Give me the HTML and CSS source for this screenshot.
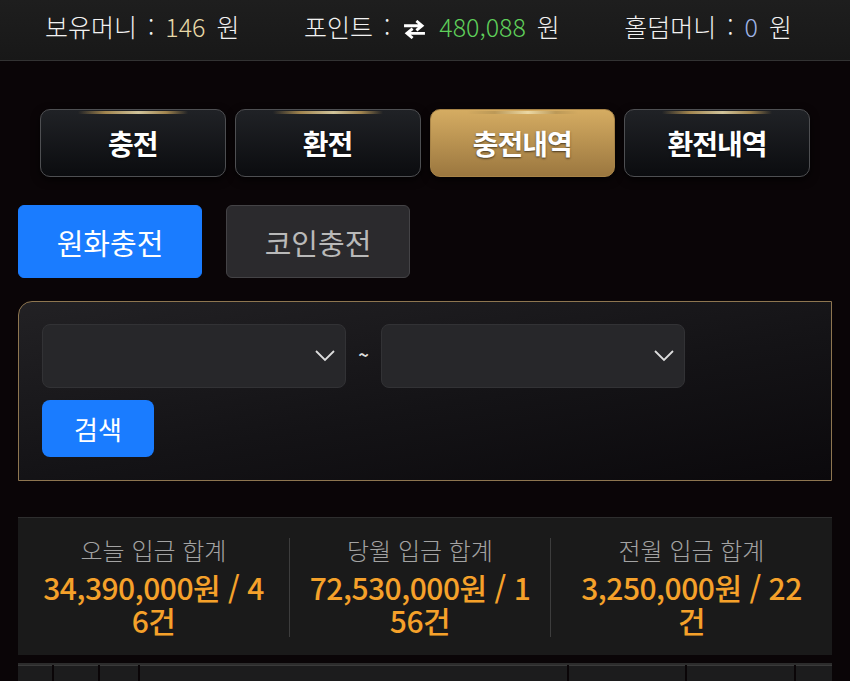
FILE: index.html
```html
<!DOCTYPE html>
<html lang="ko">
<head>
<meta charset="utf-8">
<link rel="stylesheet" href="styles.css">
</head>
<body>
<header class="topbar">
  <div class="stat-item">보유머니 : <span class="v-gold">146</span> 원</div>
  <div class="stat-item">포인트 : <svg class="swap" viewBox="0 0 26 20" width="25" height="19"><path d="M2 6h18M15 1l6 5-6 5" fill="none" stroke="#fff" stroke-width="3"/><path d="M24 14H6M11 9l-6 5 6 5" fill="none" stroke="#fff" stroke-width="3"/></svg> <span class="v-green">480,088</span> 원</div>
  <div class="stat-item">홀덤머니 : <span class="v-blue">0</span> 원</div>
</header>
<main class="page">
  <nav class="tabs">
    <button class="tab">충전</button>
    <button class="tab">환전</button>
    <button class="tab active">충전내역</button>
    <button class="tab">환전내역</button>
  </nav>
  <div class="subtabs">
    <button class="subtab on">원화충전</button>
    <button class="subtab">코인충전</button>
  </div>
  <section class="search">
    <div class="range">
      <div class="select"><svg viewBox="0 0 20 12" width="20" height="12"><path d="M1 1l9 9 9-9" fill="none" stroke="#ddd" stroke-width="1.8"/></svg></div>
      <span class="tilde">~</span>
      <div class="select"><svg viewBox="0 0 20 12" width="20" height="12"><path d="M1 1l9 9 9-9" fill="none" stroke="#ddd" stroke-width="1.8"/></svg></div>
    </div>
    <button class="btn-search">검색</button>
  </section>
  <section class="sums">
    <div class="sum">
      <div class="sum-label">오늘 입금 합계</div>
      <div class="sum-val">34,390,000원 / 46건</div>
    </div>
    <div class="sum">
      <div class="sum-label">당월 입금 합계</div>
      <div class="sum-val">72,530,000원 / 156건</div>
    </div>
    <div class="sum">
      <div class="sum-label">전월 입금 합계</div>
      <div class="sum-val">3,250,000원 / 22건</div>
    </div>
  </section>
  <div class="thead">
    <div class="th w1"></div><div class="th w2"></div><div class="th w3"></div><div class="th w4"></div><div class="th w5"></div><div class="th w6"></div><div class="th w7"></div>
  </div>
</main>
</body>
</html>
```
FILE: styles.css
```css
* { box-sizing: border-box; }
html, body { margin: 0; padding: 0; }
body {
  background: #0a0507;
  font-family: "Noto Sans CJK KR", "Noto Sans", sans-serif;
  color: #fff;
  width: 850px;
  height: 681px;
  overflow: hidden;
}
.topbar {
  height: 61px;
  background: linear-gradient(#1e1e1e, #181818);
  border-bottom: 1px solid #333;
  display: flex;
  align-items: center;
  padding: 0 58px 9px 45px;
  justify-content: space-between;
  font-size: 25px;
  font-weight: 300;
  color: #f2f2f2;
  word-spacing: 4px;
}
.stat-item { white-space: nowrap; }
.swap { vertical-align: -2px; margin: 0 1px; }
.v-gold { color: #e8d9a8; }
.v-green { color: #5fcf5a; }
.v-blue { color: #9fb4e6; }

.page {
  margin: 0 18px;
  padding-top: 48px;
}
.tabs {
  display: flex;
  gap: 9px;
  padding: 0 22px;
}
.tab {
  position: relative;
  flex: 1;
  height: 68px;
  border-radius: 10px;
  border: 1px solid #4e4f52;
  background: linear-gradient(#202226, #0b0c0f);
  color: #fff;
  font-family: inherit;
  font-size: 28px;
  font-weight: 700;
  box-shadow: 0 3px 8px rgba(0,0,0,0.7);
  text-shadow: 0 1px 2px rgba(0,0,0,0.6);
  letter-spacing: -1px;
}
.tab::before {
  content: "";
  position: absolute;
  top: 1px;
  left: 20%;
  right: 20%;
  height: 3px;
  background: linear-gradient(90deg, transparent, #b89656 25%, #efe0b0 55%, #b89656 80%, transparent);
  opacity: 0.85;
}
.tab.active {
  background: linear-gradient(#d5ac62, #9b773f);
  border-color: #a88448;
}
.subtabs {
  display: flex;
  gap: 24px;
  margin-top: 28px;
}
.subtab {
  width: 184px;
  height: 73px;
  border-radius: 6px;
  border: 1px solid #444346;
  background: #2b2a2d;
  color: #b9b9b9;
  font-family: inherit;
  font-size: 29px;
  font-weight: 400;
}
.subtab.on {
  background: #1a7cff;
  border-color: #1a7cff;
  color: #fff;
}
.search {
  margin-top: 23px;
  height: 180px;
  border: 1.5px solid #8e7650;
  border-radius: 14px 0 0 0;
  background: linear-gradient(170deg, #222124 0%, #141316 55%, #0b090c 100%);
  padding: 22px 23px 0 23px;
}
.range {
  display: flex;
  align-items: center;
}
.select {
  width: 304px;
  height: 64px;
  border: 1px solid #323235;
  border-radius: 8px;
  background: #27272a;
  display: flex;
  align-items: center;
  justify-content: flex-end;
  padding-right: 10px;
}
.tilde {
  width: 35px;
  text-align: center;
  font-size: 18px;
  font-weight: 700;
  color: #ddd;
  margin-top: -4px;
}
.btn-search {
  margin-top: 12px;
  width: 112px;
  height: 57px;
  border: none;
  border-radius: 8px;
  background: #1a7cff;
  color: #fff;
  font-family: inherit;
  font-size: 26px;
}
.sums {
  margin-top: 36px;
  height: 138px;
  background: #1a1a1a;
  border-top: 1px solid #2e2e2e;
  display: grid;
  grid-template-columns: 271px 261px 1fr;
  padding: 20px 0 18px;
}
.sum {
  padding: 0 22px;
  text-align: center;
  border-left: 1.5px solid #3d3d3d;
}
.sum:first-child { border-left: none; }
.sum:nth-child(2) { padding: 0 17px; }
.sum:nth-child(3) { padding: 0 22px; }
.sum-label {
  font-size: 24px;
  font-weight: 300;
  color: #a3a3a3;
  line-height: 28px;
  margin-top: -2px;
}
.sum-val {
  font-size: 30px;
  font-weight: 500;
  color: #f5a12a;
  line-height: 33px;
  margin-top: 7px;
  word-break: break-all;
  letter-spacing: -0.5px;
}
.thead {
  margin-top: 8px;
  height: 20px;
  border-top: 2px solid #2c2c2c;
  display: flex;
  gap: 2px;
}
.th {
  background: #1c1c1d;
  border-top: 1px solid #3a3a3a;
  height: 100%;
}
.w1 { width: 34px; }
.w2 { width: 44px; }
.w3 { width: 38px; }
.w4 { flex: 1; }
.w5 { width: 116px; }
.w6 { width: 107px; }
.w7 { width: 36px; }
```
